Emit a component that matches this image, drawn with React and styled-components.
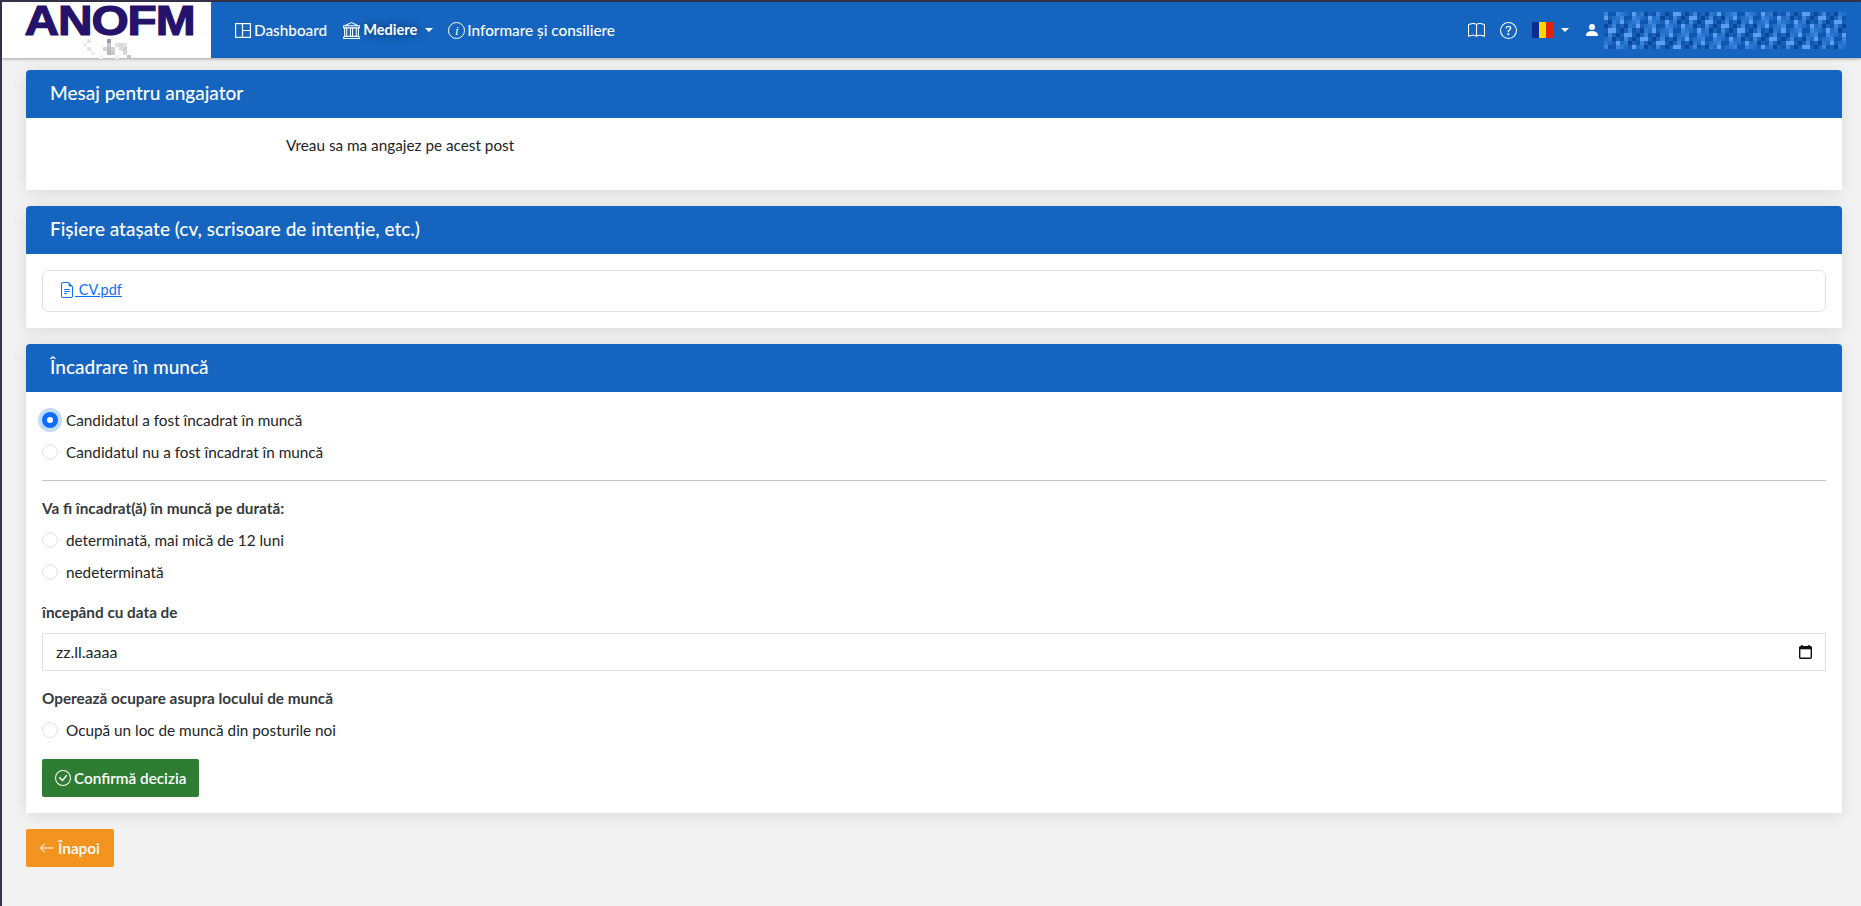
import React from 'react'
import styled, { createGlobalStyle } from 'styled-components'
import {
  BsBank,
  BsBook,
  BsQuestionCircle,
  BsPersonFill,
  BsFileEarmarkText,
  BsCheckCircle,
  BsArrowLeft,
} from 'react-icons/bs'

const BLUE = '#1565c0'

const GlobalStyle = createGlobalStyle`
  html, body {
    margin: 0;
    padding: 0;
    background: #f2f2f2;
  }
  body {
    font-family: Lato, "Noto Sans", sans-serif;
    font-size: 15.3px;
    line-height: 24px;
    color: #212529;
  }
  * {
    box-sizing: border-box;
  }
`

const Page = styled.div`
  min-height: 906px;
  border-top: 2px solid #37334a;
  border-left: 2px solid #37334a;
`

const Navbar = styled.nav`
  height: 56px;
  background: ${BLUE};
  display: flex;
  align-items: center;
  color: #fff;
  box-shadow: 0 1px 3px rgba(0, 0, 0, 0.35);
`

const LogoBox = styled.div`
  width: 209px;
  height: 56px;
  padding-left: 5px;
  background: #fff;
  display: flex;
  flex-direction: column;
  align-items: center;
  flex: none;
`

const LogoText = styled.div`
  font-family: "Liberation Sans", sans-serif;
  font-weight: 700;
  font-size: 42px;
  line-height: 37px;
  letter-spacing: -1px;
  color: #24126b;
  transform: scaleX(1.14);
  -webkit-text-stroke: 1.2px #24126b;
`

const LogoMark = styled.svg`
  margin-right: 5px;
  flex: none;
`

const NavLinks = styled.div`
  display: flex;
  align-items: center;
  gap: 13px;
  margin-left: 24px;
`

const NavLink = styled.a`
  display: flex;
  align-items: center;
  gap: ${p => p.$gap || 3}px;
  margin: 0 ${p => (p.$active ? 2 : 0)}px 0 ${p => (p.$active ? 3 : 0)}px;
  color: #fff;
  font-size: ${p => (p.$active ? '14.6px' : 'inherit')};
  font-weight: ${p => (p.$active ? 700 : 500)};
  text-shadow: ${p => (p.$active ? '0 0 8px rgba(0,0,0,.6)' : 'none')};
  white-space: nowrap;
`

const Caret = styled.span`
  display: inline-block;
  margin-left: 5px;
  border-top: 4.5px solid #fff;
  border-left: 4.5px solid transparent;
  border-right: 4.5px solid transparent;
`

const NavRight = styled.div`
  margin-left: auto;
  display: flex;
  align-items: center;
`

const NavIcon = styled.span`
  display: flex;
  margin-right: ${p => p.$gap}px;
`

const InfoBadge = styled.span`
  width: 17px;
  height: 17px;
  border: 1.3px solid #fff;
  border-radius: 50%;
  display: flex;
  align-items: center;
  justify-content: center;
  font-family: "Liberation Serif", serif;
  font-style: italic;
  font-size: 13px;
  line-height: 1;
`

const Content = styled.main`
  padding: 12px 19px 0 24px;
`

const Card = styled.section`
  background: #fff;
  margin-bottom: 16px;
  border-radius: 4px 4px 0 0;
  box-shadow: 0 2px 16px rgba(0, 0, 0, 0.1);
`

const CardHeader = styled.h2`
  margin: 0;
  height: 48px;
  padding: 0 24px;
  background: ${BLUE};
  color: #fff;
  font-size: 19px;
  font-weight: 500;
  line-height: 46px;
  border-radius: 4px 4px 0 0;
`

const MessageBody = styled.div`
  height: 72px;
  padding: 15px 0 0 260px;
`

const AttachBody = styled.div`
  padding: 16px;
`

const AttachBox = styled.div`
  height: 42px;
  border: 1px solid #dee2e6;
  border-radius: 6px;
  padding: 7px 16px;
`

const FileLink = styled.a`
  color: #0d6efd;
  font-size: 14.5px;
  text-decoration: underline;
  display: inline-flex;
  align-items: center;
`

const FormBody = styled.div`
  padding: 12px 16px 16px;
`

const RadioRow = styled.label`
  display: flex;
  align-items: center;
  gap: 8px;
  height: 32px;
  padding-bottom: 1px;
`

const RadioDot = styled.span`
  width: 16px;
  height: 16px;
  margin-top: 1px;
  border-radius: 50%;
  flex: none;
  background: #fff;
  border: ${p => (p.$checked ? '5px solid #0d6efd' : '1px solid #dee2e6')};
  box-shadow: ${p => (p.$checked ? '0 0 0 4px rgba(13,110,253,.25)' : 'none')};
`

const Divider = styled.hr`
  margin: 12px 0 11px;
  border: 0;
  border-top: 1px solid #c4c6c8;
`

const FieldLabel = styled.div`
  font-weight: 700;
  color: #343a40;
  height: ${p => p.$height || 32}px;
  padding: ${p => p.$pad || '0'};
  display: flex;
  align-items: center;
`

const DateField = styled.div`
  height: 38px;
  border: 1px solid #dee2e6;
  display: flex;
  align-items: center;
  justify-content: space-between;
  padding: 0 13px;
  margin-bottom: 11px;
  font-size: 16px;
`

const ActionButton = styled.button`
  display: inline-flex;
  align-items: center;
  gap: 3px;
  height: 38px;
  min-width: ${p => p.$minWidth || 0}px;
  padding: 0 13px;
  margin-top: ${p => p.$top || 0}px;
  border: 0;
  border-radius: 2px;
  color: #fff;
  font: inherit;
  font-weight: 600;
  background: ${p => p.$bg};
`

// blurred-out user name in the navbar
const mosaicCells = () => {
  const shades = ['#2a78d2', '#1c62b8', '#0f57ae', '#3b86dc', '#0a47a0', '#1f6fc8', '#5aa0ee', '#165fb5']
  const cells = []
  let seed = 17
  for (let y = 0; y < 9; y++) {
    for (let x = 0; x < 60; x++) {
      seed = (seed * 1103 + 12345) % 65536
      cells.push({ x, y, fill: shades[(seed >> 5) % shades.length] })
    }
  }
  return cells
}

const Mosaic = () => (
  <svg width="242" height="39" viewBox="0 0 60 9" shapeRendering="crispEdges">
    {mosaicCells().map(c => (
      <rect key={`${c.x}_${c.y}`} x={c.x} y={c.y} width="1" height="1" fill={c.fill} />
    ))}
  </svg>
)

const LOGO_PIXELS = [
  [0, 1, '#eee'], [1, 0, '#e6e6e6'], [1, 2, '#e4e4e4'], [2, 3, '#f0f0f0'],
  [6, 0, '#9c9cae'], [6, 1, '#c8c8d0'], [5, 2, '#d4d4d4'], [6, 2, '#bdbdbd'], [7, 2, '#d0d0d0'],
  [6, 3, '#b8b8b8'], [7, 3, '#c9c9c9'], [8, 1, '#e0e0e0'], [9, 1, '#d8d8d8'], [10, 1, '#e2e2e2'],
  [9, 2, '#dedede'], [10, 2, '#cfcfcf'], [10, 3, '#d9d9d9'], [11, 4, '#c4c4c4'], [4, 4, '#f2f2f2'], [8, 4, '#ededed'],
]

const LogoPixels = () => (
  <LogoMark width="48" height="20" viewBox="0 0 12 5" shapeRendering="crispEdges">
    {LOGO_PIXELS.map(([x, y, fill]) => (
      <rect key={`${x}_${y}`} x={x} y={y} width="1" height="1" fill={fill} />
    ))}
  </LogoMark>
)

const DashIcon = () => (
  <svg width="16" height="15" viewBox="0 0 16 15" fill="none" stroke="#fff" strokeWidth="1.2">
    <rect x="0.6" y="0.6" width="14.8" height="13.8" />
    <path d="M7.5 0.6V14.4M7.5 7.5H15.4" />
  </svg>
)

const Flag = () => (
  <svg width="21" height="16" viewBox="0 0 3 3" preserveAspectRatio="none">
    <rect width="1" height="3" fill="#0a2f8f" />
    <rect x="1" width="1" height="3" fill="#fcd700" />
    <rect x="2" width="1" height="3" fill="#e0220f" />
  </svg>
)

// same shape as the browser's native date picker glyph
const CalendarGlyph = () => (
  <svg width="13" height="14" viewBox="0 0 13 14" fill="none">
    <path d="M3 0V2M10 0V2" stroke="#000" strokeWidth="1.4" />
    <rect x="0.7" y="1.7" width="11.6" height="11.6" rx="1" stroke="#111" strokeWidth="1.4" />
    <rect x="0.7" y="1.7" width="11.6" height="2.6" fill="#111" />
  </svg>
)

export default function App() {
  return (
    <Page>
      <GlobalStyle />
      <Navbar>
        <LogoBox>
          <LogoText>ANOFM</LogoText>
          <LogoPixels />
        </LogoBox>
        <NavLinks>
          <NavLink><DashIcon /> Dashboard</NavLink>
          <NavLink $active><BsBank size={17} /> Mediere<Caret /></NavLink>
          <NavLink $gap={2}><InfoBadge>i</InfoBadge> Informare și consiliere</NavLink>
        </NavLinks>
        <NavRight>
          <NavIcon $gap={15}><BsBook size={17} /></NavIcon>
          <NavIcon $gap={15}><BsQuestionCircle size={17} /></NavIcon>
          <NavIcon $gap={3}><Flag /></NavIcon>
          <NavIcon $gap={15}><Caret /></NavIcon>
          <NavIcon $gap={4}><BsPersonFill size={16} /></NavIcon>
          <NavIcon $gap={15}><Mosaic /></NavIcon>
        </NavRight>
      </Navbar>
      <Content>
        <Card>
          <CardHeader>Mesaj pentru angajator</CardHeader>
          <MessageBody>Vreau sa ma angajez pe acest post</MessageBody>
        </Card>
        <Card>
          <CardHeader>Fișiere atașate (cv, scrisoare de intenție, etc.)</CardHeader>
          <AttachBody>
            <AttachBox>
              <FileLink><BsFileEarmarkText size={16} />&nbsp;CV.pdf</FileLink>
            </AttachBox>
          </AttachBody>
        </Card>
        <Card>
          <CardHeader>Încadrare în muncă</CardHeader>
          <FormBody>
            <RadioRow><RadioDot $checked />Candidatul a fost încadrat în muncă</RadioRow>
            <RadioRow><RadioDot />Candidatul nu a fost încadrat în muncă</RadioRow>
            <Divider />
            <FieldLabel>Va fi încadrat(ă) în muncă pe durată:</FieldLabel>
            <RadioRow><RadioDot />determinată, mai mică de 12 luni</RadioRow>
            <RadioRow><RadioDot />nedeterminată</RadioRow>
            <FieldLabel $height={45} $pad="3px 0 0">începând cu data de</FieldLabel>
            <DateField>zz.ll.aaaa<CalendarGlyph /></DateField>
            <FieldLabel>Operează ocupare asupra locului de muncă</FieldLabel>
            <RadioRow><RadioDot />Ocupă un loc de muncă din posturile noi</RadioRow>
            <ActionButton $bg="#2e7d32" $top={13}><BsCheckCircle size={16} /> Confirmă decizia</ActionButton>
          </FormBody>
        </Card>
        <ActionButton $bg="#f39420" $minWidth={88}><BsArrowLeft size={16} /> Înapoi</ActionButton>
      </Content>
    </Page>
  )
}
